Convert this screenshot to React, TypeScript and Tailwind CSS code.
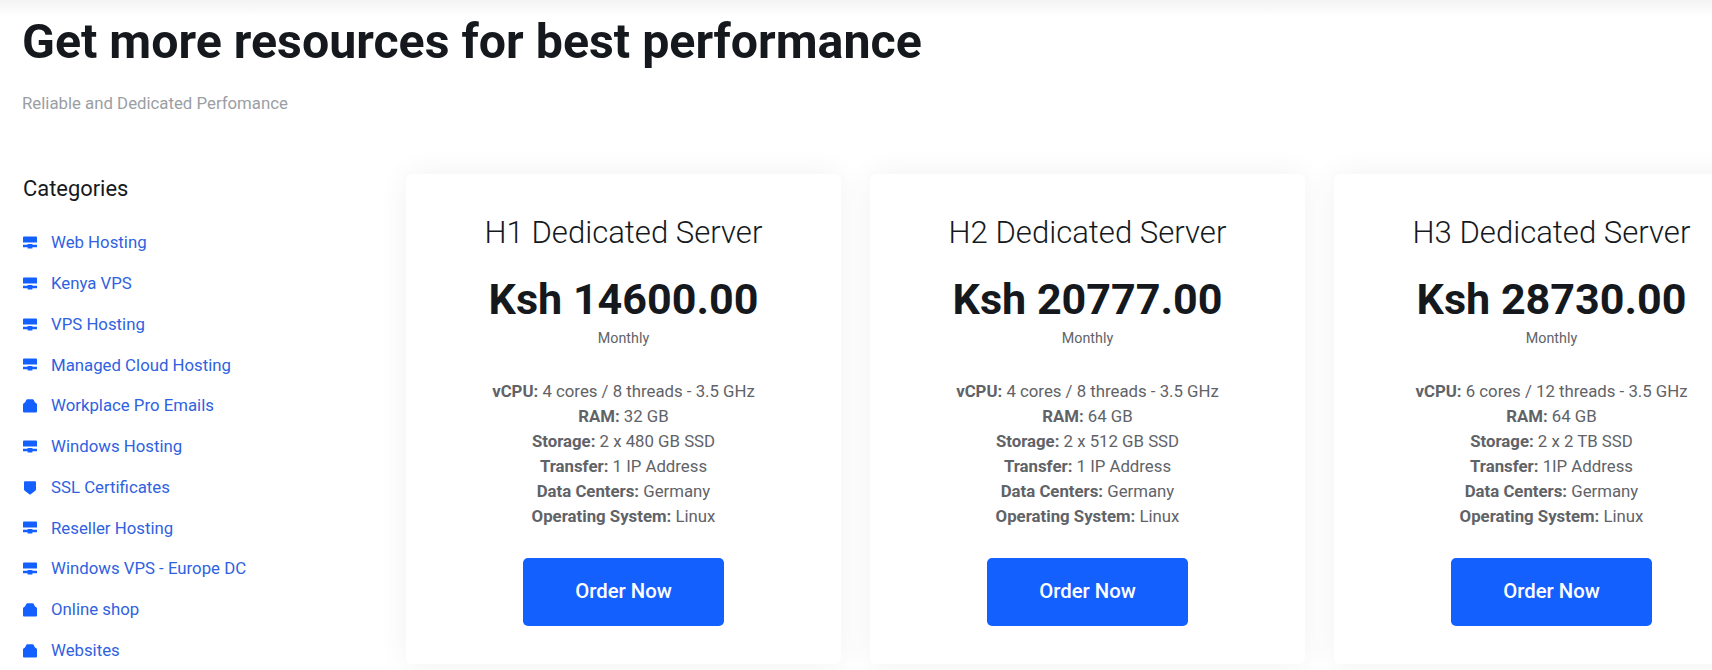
import React from "react";

type IconKind = "server" | "box" | "shield";

const categories: { label: string; icon: IconKind }[] = [
  { label: "Web Hosting", icon: "server" },
  { label: "Kenya VPS", icon: "server" },
  { label: "VPS Hosting", icon: "server" },
  { label: "Managed Cloud Hosting", icon: "server" },
  { label: "Workplace Pro Emails", icon: "box" },
  { label: "Windows Hosting", icon: "server" },
  { label: "SSL Certificates", icon: "shield" },
  { label: "Reseller Hosting", icon: "server" },
  { label: "Windows VPS - Europe DC", icon: "server" },
  { label: "Online shop", icon: "box" },
  { label: "Websites", icon: "box" },
];

const plans = [
  { name: "H1 Dedicated Server", price: "Ksh 14600.00", cpu: "4 cores / 8 threads - 3.5 GHz", ram: "32 GB", storage: "2 x 480 GB SSD", transfer: "1 IP Address" },
  { name: "H2 Dedicated Server", price: "Ksh 20777.00", cpu: "4 cores / 8 threads - 3.5 GHz", ram: "64 GB", storage: "2 x 512 GB SSD", transfer: "1 IP Address" },
  { name: "H3 Dedicated Server", price: "Ksh 28730.00", cpu: "6 cores / 12 threads - 3.5 GHz", ram: "64 GB", storage: "2 x 2 TB SSD", transfer: "1IP Address" },
];

const CategoryIcon: React.FC<{ kind: IconKind }> = ({ kind }) => {
  if (kind === "server") {
    return (
      <svg width="14" height="14" viewBox="0 0 14 14" className="shrink-0 fill-[#1460ff]">
        <path d="M1 0.5h12a1 1 0 0 1 1 1v5H0v-5a1 1 0 0 1 1-1z" />
        <path d="M0 8.8h4.6V8h4.8v0.8H14v2.4H9.4v1.4H4.6v-1.4H0z" />
      </svg>
    );
  }
  if (kind === "shield") {
    return (
      <svg width="14" height="14" viewBox="0 0 14 14" className="shrink-0 fill-[#1460ff]">
        <path d="M2 0.2h10a1 1 0 0 1 1 1v7a2 2 0 0 1-0.7 1.5L7 13.8 1.7 9.7A2 2 0 0 1 1 8.2v-7a1 1 0 0 1 1-1z" />
      </svg>
    );
  }
  return (
    <svg width="14" height="14" viewBox="0 0 14 14" className="shrink-0 fill-[#1460ff]">
      <path d="M4.4 0.3h5.2a1.2 1.2 0 0 1 1.1 0.7L12 3.6l1.2 0.6a1.4 1.4 0 0 1 0.8 1.2v7a1 1 0 0 1-1 1H1a1 1 0 0 1-1-1v-7a1.4 1.4 0 0 1 0.8-1.2L2 3.6 3.3 1a1.2 1.2 0 0 1 1.1-0.7z" />
    </svg>
  );
};

export default function App() {
  return (
    <div className="relative h-[670px] w-[1712px] overflow-hidden bg-white font-['Roboto',sans-serif]">
      <div className="h-4 bg-gradient-to-b from-[#f3f3f3] to-white" />
      <div className="pl-[22px]">
        <h1 className="mt-[1.5px] text-[48.3px] font-bold leading-[48px] text-[#15191d]">Get more resources for best performance</h1>
        <p className="mt-[25.5px] text-[16.8px] leading-6 text-[#9a9ea4]">Reliable and Dedicated Perfomance</p>
      </div>
      <div className="mt-[59px] flex pl-[23px]">
        <aside className="w-[383px] shrink-0 pt-px">
          <h2 className="text-[21.9px] font-normal leading-[28px] text-[#15191d]">Categories</h2>
          <ul className="mt-[28px] flex flex-col gap-[16.75px]">
            {categories.map((c) => (
              <li key={c.label} className="flex h-6 items-center gap-[14px] text-[16.8px] text-[#2f62e0]">
                <CategoryIcon kind={c.icon} />
                <span>{c.label}</span>
              </li>
            ))}
          </ul>
        </aside>
        <div className="flex shrink-0 gap-[29px]">
          {plans.map((p) => (
            <div
              key={p.name}
              className="flex h-[490px] w-[435px] shrink-0 flex-col items-center rounded-md bg-white pt-[39px] text-center shadow-[0_0_30px_rgba(0,0,0,0.06)]"
            >
              <h3 className="text-[31.1px] font-light leading-[40px] text-[#15191d]">{p.name}</h3>
              <div className="mt-[21px] text-[43.1px] font-bold leading-[52px] text-[#15191d]">{p.price}</div>
              <div className="mt-[2px] text-[14.3px] leading-5 text-[#5f6368]">Monthly</div>
              <div className="mt-[30.5px] text-[16.8px] leading-[25px] text-[#5f6368]">
                <div><b className="font-bold">vCPU:</b> {p.cpu}</div>
                <div><b className="font-bold">RAM:</b> {p.ram}</div>
                <div><b className="font-bold">Storage:</b> {p.storage}</div>
                <div><b className="font-bold">Transfer:</b> {p.transfer}</div>
                <div><b className="font-bold">Data Centers:</b> Germany</div>
                <div><b className="font-bold">Operating System:</b> Linux</div>
              </div>
              <button className="mt-[29px] h-[68px] w-[201px] rounded-[5px] bg-[#1460ff] text-[20.3px] font-medium text-white">
                Order Now
              </button>
            </div>
          ))}
        </div>
      </div>
    </div>
  );
}
